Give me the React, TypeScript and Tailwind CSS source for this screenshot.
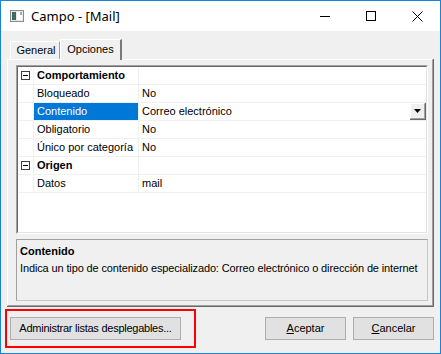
import React from 'react';

type Row =
  | { kind: 'cat'; label: string }
  | { kind: 'prop'; name: string; value: string; selected?: boolean };

const rows: Row[] = [
  { kind: 'cat', label: 'Comportamiento' },
  { kind: 'prop', name: 'Bloqueado', value: 'No' },
  { kind: 'prop', name: 'Contenido', value: 'Correo electrónico', selected: true },
  { kind: 'prop', name: 'Obligatorio', value: 'No' },
  { kind: 'prop', name: 'Único por categoría', value: 'No' },
  { kind: 'cat', label: 'Origen' },
  { kind: 'prop', name: 'Datos', value: 'mail' },
];

const MinusBox = () => (
  <span className="flex items-center justify-center w-[9px] h-[9px] border border-[#3c3c3c] bg-white">
    <span className="block w-[5px] h-px bg-black" />
  </span>
);

const DropButton = () => (
  <div className="w-[16px] h-[17px] border-r border-b border-[#696969] flex">
    <div className="flex-1 flex items-center justify-center bg-[#f0f0f0] border-t border-l border-white border-r border-b border-r-[#a0a0a0] border-b-[#a0a0a0]">
      <svg width="7" height="4" viewBox="0 0 7 4">
        <path d="M0 0h7L3.5 4z" fill="#000" />
      </svg>
    </div>
  </div>
);

const WinButton: React.FC<{ children: React.ReactNode; className?: string }> = ({ children, className }) => (
  <button className={`h-[23px] bg-[#e1e1e1] border border-[#adadad] text-[11px] text-black flex items-center justify-center ${className ?? ''}`}>
    {children}
  </button>
);

export default function App() {
  return (
    <div className="w-[441px] h-[354px] border border-[#1883d7] flex flex-col bg-white font-['Liberation_Sans',Arial,sans-serif] text-[11px] text-black">
      {/* title bar */}
      <div className="h-[30px] flex items-center bg-white shrink-0">
        <div className="ml-[8px] w-[16px] h-[16px]">
          <svg width="16" height="16" viewBox="0 0 16 16">
            <rect x="1.5" y="2.5" width="13" height="11" fill="#e8e8e8" stroke="#8a8a8a" />
            <rect x="3" y="4" width="4" height="8" fill="#3d6b5e" />
            <rect x="8" y="4" width="5" height="8" fill="#ffffff" />
            <rect x="11" y="4" width="2" height="3" fill="#9bb0a8" />
          </svg>
        </div>
        <span className="ml-[6px] text-[13px] font-['Noto_Sans',sans-serif] text-black leading-none">Campo - [Mail]</span>
        <div className="ml-auto flex h-full">
          <div className="w-[46px] h-full flex items-center justify-center">
            <svg width="10" height="10" viewBox="0 0 10 10">
              <path d="M0 5.5h10" stroke="#000" strokeWidth="1" />
            </svg>
          </div>
          <div className="w-[46px] h-full flex items-center justify-center">
            <svg width="10" height="10" viewBox="0 0 10 10">
              <rect x="0.5" y="0.5" width="9" height="9" fill="none" stroke="#000" strokeWidth="1" />
            </svg>
          </div>
          <div className="w-[46px] h-full flex items-center justify-center">
            <svg width="11" height="11" viewBox="0 0 11 11">
              <path d="M0.5 0.5l10 10M10.5 0.5l-10 10" stroke="#000" strokeWidth="1" />
            </svg>
          </div>
        </div>
      </div>

      {/* client */}
      <div className="flex-1 bg-[#f0f0f0] flex flex-col pt-[8px] px-[6px]">
        {/* tab strip */}
        <div className="h-[20px] flex items-end pl-[3px] relative z-10">
          <div className="h-[18px] w-[50px] border-t border-l border-white border-r border-r-[#a0a0a0] flex items-center justify-center pl-[2px]">
            General
          </div>
          <div className="h-[21px] w-[62px] -mb-px bg-[#f0f0f0] border-t border-l border-white border-r-2 border-r-[#7a7a7a] flex items-center justify-center pb-[2px]">
            Opciones
          </div>
        </div>

        {/* tab page */}
        <div className="h-[248px] border-r border-b border-[#696969] flex">
          <div className="flex-1 flex flex-col border-t border-l border-white border-r border-b border-r-[#a0a0a0] border-b-[#a0a0a0] pl-[8px] pt-[5px] pr-[4px] pb-[4px]">
            {/* property grid */}
            <div className="h-[169px] border border-[#a0a0a0] border-r-white border-b-white flex">
              <div className="flex-1 border border-[#696969] border-r-[#e3e3e3] border-b-[#e3e3e3] bg-white flex flex-col">
                {rows.map((r, i) =>
                  r.kind === 'cat' ? (
                    <div key={i} className="h-[18px] flex border-b border-[#f0f0f0]">
                      <div className="w-[16px] border-r border-[#f0f0f0] flex items-center justify-center">
                        <MinusBox />
                      </div>
                      <div className="w-[105px] border-r border-[#f0f0f0] pl-[3px] flex items-center font-bold text-[11px]">
                        {r.label}
                      </div>
                      <div className="flex-1" />
                    </div>
                  ) : (
                    <div key={i} className="h-[18px] flex border-b border-[#f0f0f0]">
                      <div className="w-[16px] border-r border-[#f0f0f0]" />
                      <div
                        className={`w-[105px] border-r border-[#f0f0f0] pl-[3px] flex items-center whitespace-nowrap overflow-hidden ${
                          r.selected ? 'bg-[#0078d7] text-white' : ''
                        }`}
                      >
                        {r.name}
                      </div>
                      <div className="flex-1 flex items-center pl-[3px] whitespace-nowrap">
                        <span className="flex-1">{r.value}</span>
                        {r.selected && <DropButton />}
                      </div>
                    </div>
                  )
                )}
              </div>
            </div>

            {/* description */}
            <div className="mt-[5px] h-[62px] border border-[#a0a0a0] border-r-[#c8c8c8] border-b-[#c8c8c8] px-[3px] pt-[4px]">
              <div className="font-bold leading-[14px]">Contenido</div>
              <div className="mt-[3px] leading-[14px] whitespace-nowrap tracking-[-0.13px]">
                Indica un tipo de contenido especializado: Correo electrónico o dirección de internet
              </div>
            </div>
          </div>
        </div>

        {/* buttons */}
        <div className="mt-[2px] flex items-start -ml-[2px]">
          <div className="border-2 border-[#ff0000] pl-[3px] pr-[13px] py-[6px]">
            <WinButton className="w-[171px] tracking-[-0.25px]">Administrar listas desplegables...</WinButton>
          </div>
          <div className="ml-auto mt-[8px] flex gap-[7px]">
            <WinButton className="w-[81px]">
              <span>
                <span className="underline">A</span>ceptar
              </span>
            </WinButton>
            <WinButton className="w-[81px]">
              <span>
                <span className="underline">C</span>ancelar
              </span>
            </WinButton>
          </div>
        </div>
      </div>
    </div>
  );
}
